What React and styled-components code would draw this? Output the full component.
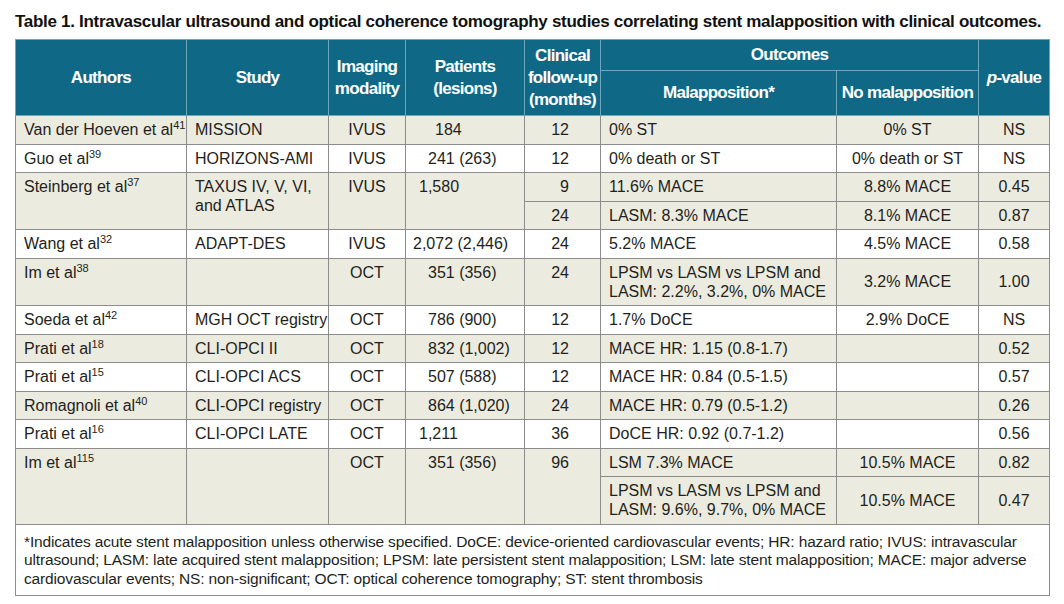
import React from 'react'
import styled, { createGlobalStyle } from 'styled-components'

const GlobalStyle = createGlobalStyle`
  html, body {
    margin: 0;
    padding: 0;
    background: #fff;
  }
  body {
    font-family: "Liberation Sans", Arial, sans-serif;
    color: #231f20;
  }
`

const sans = `"Liberation Sans", Arial, sans-serif`

const Page = styled.div`
  width: 1034px;
  padding: 10px 15px 0;
`

const Title = styled.h1`
  margin: 0 0 6px;
  font-family: ${sans};
  font-size: 17px;
  line-height: 23px;
  font-weight: bold;
  letter-spacing: -0.3px;
  color: #111;
  white-space: nowrap;
`

const Table = styled.table`
  width: 1034px;
  table-layout: fixed;
  border-collapse: collapse;
  border: 1px solid #8c8c8c;
  font-family: ${sans};
  font-size: 16px;
  color: #231f20;
`

const HeadCell = styled.th`
  background: #0f6986;
  color: #fff;
  font-family: ${sans};
  font-weight: bold;
  font-size: 17px;
  letter-spacing: -0.7px;
  line-height: 22px;
  padding: 4px 2px;
  text-align: center;
  vertical-align: middle;
  white-space: nowrap;
  border: 1px solid #6ea7bb;
  height: ${p => p.$h || 'auto'};
`

const Row = styled.tr`
  background: ${p => (p.$shade ? '#ecebdf' : '#ffffff')};
`

const Cell = styled.td`
  padding: 4.25px 8px;
  line-height: 19px;
  text-align: left;
  vertical-align: ${p => (p.$mid ? 'middle' : 'top')};
  border: 1px solid #8c8c8c;
  white-space: nowrap;
`

const CenterCell = styled(Cell)`
  text-align: center;
`

const NumCell = styled(Cell)`
  padding-left: ${p => p.$indent ?? 22}px;
  padding-right: 2px;
`

const MonthCell = styled(Cell)`
  text-align: right;
  padding-right: 31px;
`

const Sup = styled.sup`
  font-size: 11px;
  line-height: 0;
  vertical-align: baseline;
  position: relative;
  top: -6px;
`

const Note = styled.td`
  padding: 8px 8px 7px;
  border: 1px solid #8c8c8c;
  font-family: ${sans};
  font-size: 15.5px;
  letter-spacing: -0.15px;
  line-height: 18.5px;
  white-space: nowrap;
  color: #231f20;
`

const Author = ({ name, cite, ...rest }) => (
  <Cell {...rest}>
    {name}
    <Sup>{cite}</Sup>
  </Cell>
)

export default function App() {
  return (
    <>
      <GlobalStyle />
      <Page>
        <Title>
          Table 1. Intravascular ultrasound and optical coherence tomography studies correlating stent
          malapposition with clinical outcomes.
        </Title>
        <Table>
          <colgroup>
            <col style={{ width: 171 }} />
            <col style={{ width: 142 }} />
            <col style={{ width: 77 }} />
            <col style={{ width: 119 }} />
            <col style={{ width: 76 }} />
            <col style={{ width: 236 }} />
            <col style={{ width: 142 }} />
            <col style={{ width: 71 }} />
          </colgroup>
          <thead>
            <tr>
              <HeadCell rowSpan={2}>Authors</HeadCell>
              <HeadCell rowSpan={2}>Study</HeadCell>
              <HeadCell rowSpan={2}>
                Imaging
                <br />
                modality
              </HeadCell>
              <HeadCell rowSpan={2}>
                Patients
                <br />
                (lesions)
              </HeadCell>
              <HeadCell rowSpan={2}>
                Clinical
                <br />
                follow-up
                <br />
                (months)
              </HeadCell>
              <HeadCell colSpan={2} $h="21px">Outcomes</HeadCell>
              <HeadCell rowSpan={2}>
                <i>p</i>-value
              </HeadCell>
            </tr>
            <tr>
              <HeadCell $h="36px">Malapposition*</HeadCell>
              <HeadCell>No malapposition</HeadCell>
            </tr>
          </thead>
          <tbody>
            <Row $shade>
              <Author name="Van der Hoeven et al" cite="41" />
              <Cell>MISSION</Cell>
              <CenterCell>IVUS</CenterCell>
              <NumCell $indent={29}>184</NumCell>
              <MonthCell>12</MonthCell>
              <Cell>0% ST</Cell>
              <CenterCell>0% ST</CenterCell>
              <CenterCell>NS</CenterCell>
            </Row>
            <Row>
              <Author name="Guo et al" cite="39" />
              <Cell>HORIZONS-AMI</Cell>
              <CenterCell>IVUS</CenterCell>
              <NumCell>241 (263)</NumCell>
              <MonthCell>12</MonthCell>
              <Cell>0% death or ST</Cell>
              <CenterCell>0% death or ST</CenterCell>
              <CenterCell>NS</CenterCell>
            </Row>
            <Row $shade>
              <Author name="Steinberg et al" cite="37" rowSpan={2} />
              <Cell rowSpan={2}>
                TAXUS IV, V, VI,
                <br />
                and ATLAS
              </Cell>
              <CenterCell rowSpan={2}>IVUS</CenterCell>
              <NumCell rowSpan={2} $indent={13}>
                1,580
              </NumCell>
              <MonthCell>9</MonthCell>
              <Cell>11.6% MACE</Cell>
              <CenterCell>8.8% MACE</CenterCell>
              <CenterCell>0.45</CenterCell>
            </Row>
            <Row $shade>
              <MonthCell>24</MonthCell>
              <Cell>LASM: 8.3% MACE</Cell>
              <CenterCell>8.1% MACE</CenterCell>
              <CenterCell>0.87</CenterCell>
            </Row>
            <Row>
              <Author name="Wang et al" cite="32" />
              <Cell>ADAPT-DES</Cell>
              <CenterCell>IVUS</CenterCell>
              <NumCell $indent={7}>2,072 (2,446)</NumCell>
              <MonthCell>24</MonthCell>
              <Cell>5.2% MACE</Cell>
              <CenterCell>4.5% MACE</CenterCell>
              <CenterCell>0.58</CenterCell>
            </Row>
            <Row $shade>
              <Author name="Im et al" cite="38" />
              <Cell />
              <CenterCell>OCT</CenterCell>
              <NumCell>351 (356)</NumCell>
              <MonthCell>24</MonthCell>
              <Cell>
                LPSM vs LASM vs LPSM and
                <br />
                LASM: 2.2%, 3.2%, 0% MACE
              </Cell>
              <CenterCell $mid>3.2% MACE</CenterCell>
              <CenterCell $mid>1.00</CenterCell>
            </Row>
            <Row>
              <Author name="Soeda et al" cite="42" />
              <Cell>MGH OCT registry</Cell>
              <CenterCell>OCT</CenterCell>
              <NumCell>786 (900)</NumCell>
              <MonthCell>12</MonthCell>
              <Cell>1.7% DoCE</Cell>
              <CenterCell>2.9% DoCE</CenterCell>
              <CenterCell>NS</CenterCell>
            </Row>
            <Row $shade>
              <Author name="Prati et al" cite="18" />
              <Cell>CLI-OPCI II</Cell>
              <CenterCell>OCT</CenterCell>
              <NumCell>832 (1,002)</NumCell>
              <MonthCell>12</MonthCell>
              <Cell>MACE HR: 1.15 (0.8-1.7)</Cell>
              <CenterCell />
              <CenterCell>0.52</CenterCell>
            </Row>
            <Row>
              <Author name="Prati et al" cite="15" />
              <Cell>CLI-OPCI ACS</Cell>
              <CenterCell>OCT</CenterCell>
              <NumCell>507 (588)</NumCell>
              <MonthCell>12</MonthCell>
              <Cell>MACE HR: 0.84 (0.5-1.5)</Cell>
              <CenterCell />
              <CenterCell>0.57</CenterCell>
            </Row>
            <Row $shade>
              <Author name="Romagnoli et al" cite="40" />
              <Cell>CLI-OPCI registry</Cell>
              <CenterCell>OCT</CenterCell>
              <NumCell>864 (1,020)</NumCell>
              <MonthCell>24</MonthCell>
              <Cell>MACE HR: 0.79 (0.5-1.2)</Cell>
              <CenterCell />
              <CenterCell>0.26</CenterCell>
            </Row>
            <Row>
              <Author name="Prati et al" cite="16" />
              <Cell>CLI-OPCI LATE</Cell>
              <CenterCell>OCT</CenterCell>
              <NumCell $indent={13}>1,211</NumCell>
              <MonthCell>36</MonthCell>
              <Cell>DoCE HR: 0.92 (0.7-1.2)</Cell>
              <CenterCell />
              <CenterCell>0.56</CenterCell>
            </Row>
            <Row $shade>
              <Author name="Im et al" cite="115" rowSpan={2} />
              <Cell rowSpan={2} />
              <CenterCell rowSpan={2}>OCT</CenterCell>
              <NumCell rowSpan={2}>351 (356)</NumCell>
              <MonthCell rowSpan={2}>96</MonthCell>
              <Cell>LSM 7.3% MACE</Cell>
              <CenterCell>10.5% MACE</CenterCell>
              <CenterCell>0.82</CenterCell>
            </Row>
            <Row $shade>
              <Cell>
                LPSM vs LASM vs LPSM and
                <br />
                LASM: 9.6%, 9.7%, 0% MACE
              </Cell>
              <CenterCell $mid>10.5% MACE</CenterCell>
              <CenterCell $mid>0.47</CenterCell>
            </Row>
            <tr>
              <Note colSpan={8}>
                *Indicates acute stent malapposition unless otherwise specified. DoCE: device-oriented
                cardiovascular events; HR: hazard ratio; IVUS: intravascular
                <br />
                ultrasound; LASM: late acquired stent malapposition; LPSM: late persistent stent malapposition;
                LSM: late stent malapposition; MACE: major adverse
                <br />
                cardiovascular events; NS: non-significant; OCT: optical coherence tomography; ST: stent
                thrombosis
              </Note>
            </tr>
          </tbody>
        </Table>
      </Page>
    </>
  )
}
